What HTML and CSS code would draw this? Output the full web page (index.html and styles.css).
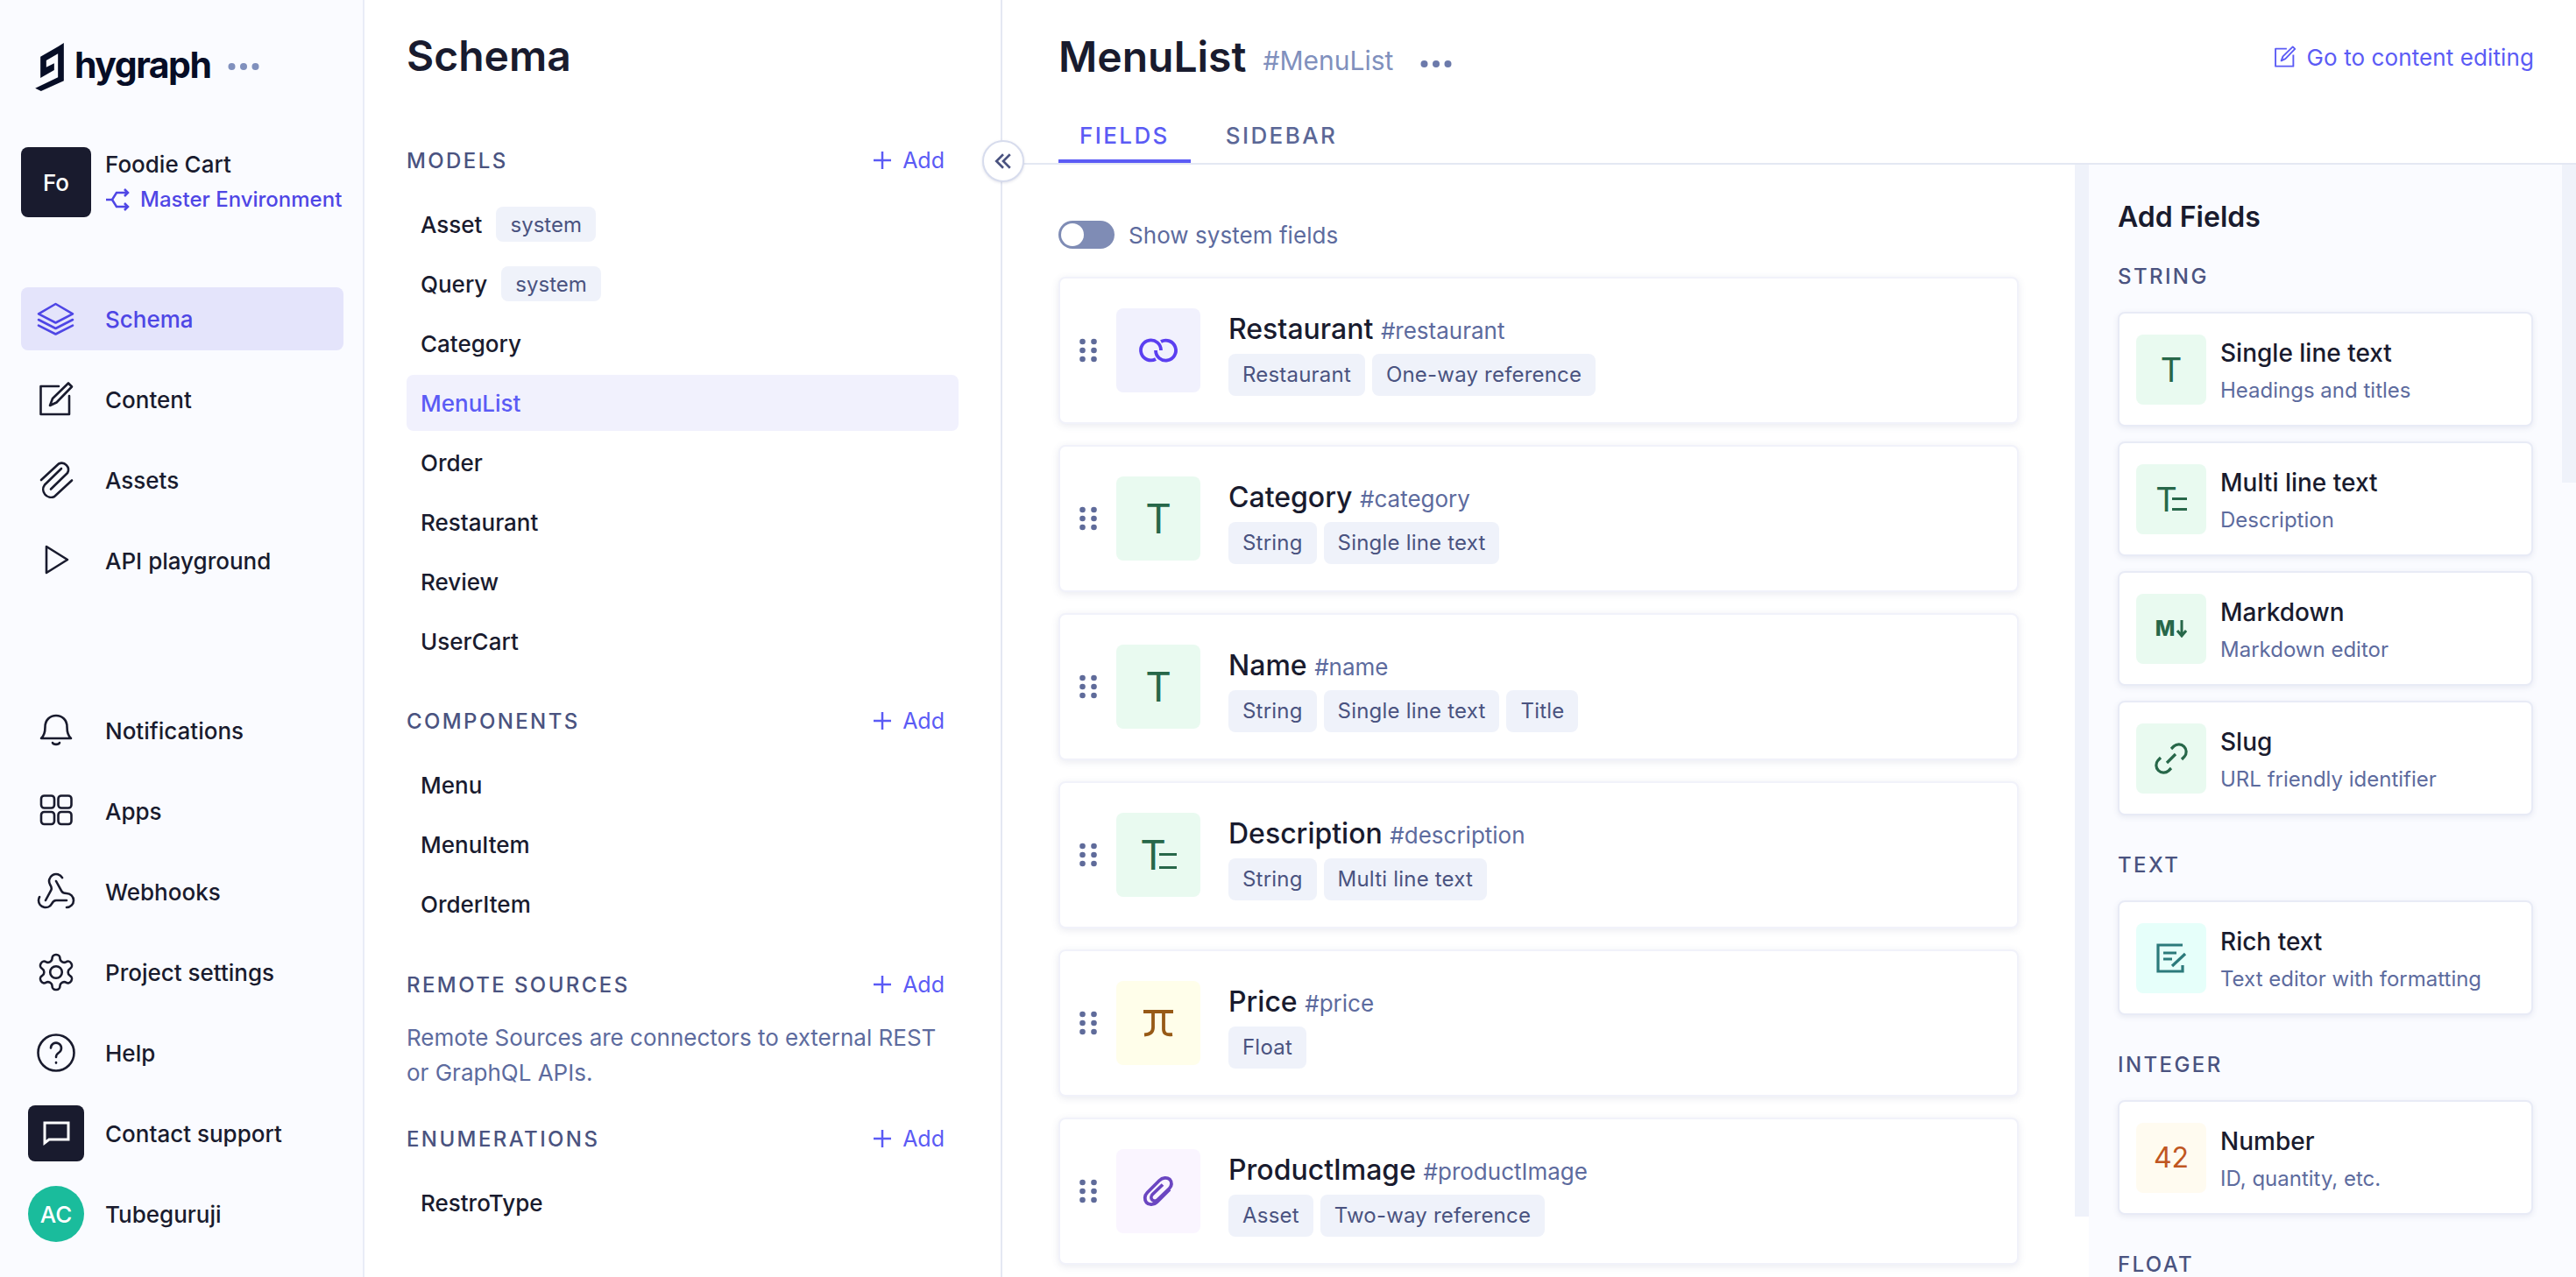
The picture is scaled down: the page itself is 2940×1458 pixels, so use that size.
FILE: index.html
```html
<!DOCTYPE html>
<html lang="en">
<head>
<meta charset="utf-8">
<title>Schema - MenuList</title>
<link rel="stylesheet" href="styles.css">
</head>
<body>
<svg class="defs" width="0" height="0" aria-hidden="true">
  <symbol id="i-layers" viewBox="0 0 48 48"><path d="M23.5 7 43 18.3 23.5 28.5 4 18.3Z"/><path d="M4 25 23.5 35 43 25"/><path d="M4 31.7 23.5 41.5 43 31.7"/></symbol>
  <symbol id="i-edit" viewBox="0 0 48 48"><path d="M27 9H6.5V41H39V20"/><path d="M17 31l3-8L38 5.500l4 4L24.500 27.500Z"/></symbol>
  <symbol id="i-clip" viewBox="0 0 48 48"><path d="M7 24 27 5.500A7.600 7.600 0 0 1 37 16L18 34.500"/><path d="M42 24.500 22 43A9 9 0 0 1 11 29.500L30 11"/></symbol>
  <symbol id="i-play" viewBox="0 0 48 48"><path d="M13 8 37 23 13 38Z"/></symbol>
  <symbol id="i-bell" viewBox="0 0 48 48"><path d="M7 33H41C37.500 30 36.500 26 36.500 20 36.500 12 31 7 24 7 17 7 11.500 12 11.500 20 11.500 26 10.500 30 7 33Z"/><path d="M20 38C21 40.500 27 40.500 28 38"/></symbol>
  <symbol id="i-apps" viewBox="0 0 48 48"><rect x="7" y="6.500" width="15" height="14" rx="3.500"/><rect x="26.500" y="6.500" width="15" height="14" rx="3.500"/><rect x="7" y="25" width="15" height="14" rx="3.500"/><rect x="26.500" y="25" width="15" height="14" rx="3.500"/></symbol>
  <symbol id="i-hook" viewBox="0 0 24 24"><path d="M18 16.980h-5.990c-1.100 0-1.950.940-2.480 1.900A4 4 0 0 1 2 17c.010-.700.200-1.400.570-2"/><path d="m6 17 3.130-5.780c.530-.970.100-2.180-.500-3.100a4 4 0 1 1 6.890-4.060"/><path d="m12 6 3.130 5.730C15.660 12.700 16.900 13 18 13a4 4 0 0 1 0 8"/></symbol>
  <symbol id="i-gear" viewBox="0 0 24 24"><path d="M12.220 2h-.440a2 2 0 0 0-2 2v.180a2 2 0 0 1-1 1.730l-.430.250a2 2 0 0 1-2 0l-.150-.080a2 2 0 0 0-2.730.730l-.220.380a2 2 0 0 0 .730 2.730l.150.100a2 2 0 0 1 1 1.720v.510a2 2 0 0 1-1 1.740l-.150.090a2 2 0 0 0-.730 2.730l.220.380a2 2 0 0 0 2.730.730l.150-.080a2 2 0 0 1 2 0l.430.250a2 2 0 0 1 1 1.730V20a2 2 0 0 0 2 2h.440a2 2 0 0 0 2-2v-.180a2 2 0 0 1 1-1.730l.430-.250a2 2 0 0 1 2 0l.150.080a2 2 0 0 0 2.730-.730l.220-.390a2 2 0 0 0-.730-2.730l-.150-.080a2 2 0 0 1-1-1.740v-.500a2 2 0 0 1 1-1.740l.150-.090a2 2 0 0 0 .730-2.730l-.220-.380a2 2 0 0 0-2.730-.730l-.150.080a2 2 0 0 1-2 0l-.430-.250a2 2 0 0 1-1-1.730V4a2 2 0 0 0-2-2z"/><circle cx="12" cy="12" r="3.400"/></symbol>
  <symbol id="i-help" viewBox="0 0 48 48"><circle cx="24" cy="24" r="20.500"/><path d="M18 18.500a6 6 0 1 1 9.500 5c-2.200 1.500-3.500 2.700-3.500 5.500"/><path d="M24 35v.6"/></symbol>
  <symbol id="i-plus" viewBox="0 0 20 20"><path d="M10 0V20M0 10H20"/></symbol>
  <symbol id="i-drag" viewBox="0 0 20 28"><circle cx="3.500" cy="4" r="3.300"/><circle cx="16.500" cy="4" r="3.300"/><circle cx="3.500" cy="14" r="3.300"/><circle cx="16.500" cy="14" r="3.300"/><circle cx="3.500" cy="24" r="3.300"/><circle cx="16.500" cy="24" r="3.300"/></symbol>
  <symbol id="i-dots" viewBox="0 0 36 10"><circle cx="4.500" cy="5" r="4"/><circle cx="18" cy="5" r="4"/><circle cx="31.500" cy="5" r="4"/></symbol>
</svg>

<div class="app">
  <aside class="rail">
    <div class="brand">
      <svg class="brand-mark" viewBox="30 25 98 165"><path d="M128 25V155L50 190 30 180 108 143V62L68 85V108L95 95V118L48 145V72L108 38Z"/></svg>
      <span class="brand-name">hygraph</span>
      <svg class="brand-dots" viewBox="0 0 36 10"><use href="#i-dots"/></svg>
    </div>
    <div class="project">
      <div class="project-badge">Fo</div>
      <div class="project-text">
        <div class="project-name">Foodie Cart</div>
        <div class="project-env">
          <svg class="env-icon" viewBox="0 0 28 26"><path d="M1 13H8L13 5H25M8 13l5 8H25M22 1l4 4-4 4M22 17l4 4-4 4"/></svg>
          <span>Master Environment</span>
        </div>
      </div>
    </div>
    <nav class="rail-nav">
      <a class="rail-item is-active"><span class="rail-slot"><svg class="rail-icon"><use href="#i-layers"/></svg></span><span>Schema</span></a>
      <a class="rail-item"><span class="rail-slot"><svg class="rail-icon"><use href="#i-edit"/></svg></span><span>Content</span></a>
      <a class="rail-item"><span class="rail-slot"><svg class="rail-icon"><use href="#i-clip"/></svg></span><span>Assets</span></a>
      <a class="rail-item"><span class="rail-slot"><svg class="rail-icon"><use href="#i-play"/></svg></span><span>API playground</span></a>
    </nav>
    <nav class="rail-nav rail-nav-bottom">
      <a class="rail-item"><span class="rail-slot"><svg class="rail-icon"><use href="#i-bell"/></svg></span><span>Notifications</span></a>
      <a class="rail-item"><span class="rail-slot"><svg class="rail-icon"><use href="#i-apps"/></svg></span><span>Apps</span></a>
      <a class="rail-item"><span class="rail-slot"><svg class="rail-icon rail-icon-sm"><use href="#i-hook"/></svg></span><span>Webhooks</span></a>
      <a class="rail-item"><span class="rail-slot"><svg class="rail-icon rail-icon-gear"><use href="#i-gear"/></svg></span><span>Project settings</span></a>
      <a class="rail-item"><span class="rail-slot"><svg class="rail-icon"><use href="#i-help"/></svg></span><span>Help</span></a>
      <a class="rail-item"><span class="rail-slot"><span class="support-badge"><svg class="support-icon" viewBox="0 0 64 64"><path d="M19 20H46V39H24L19 43Z"/></svg></span></span><span>Contact support</span></a>
      <a class="rail-item"><span class="rail-slot"><span class="user-badge">AC</span></span><span>Tubeguruji</span></a>
    </nav>
  </aside>

  <section class="models">
    <h1 class="models-title">Schema</h1>
    <div class="group-head group-head-first"><span>MODELS</span><a class="add"><svg class="add-icon"><use href="#i-plus"/></svg>Add</a></div>
    <ul class="list">
      <li class="list-item">Asset<span class="sys">system</span></li>
      <li class="list-item">Query<span class="sys">system</span></li>
      <li class="list-item">Category</li>
      <li class="list-item is-selected">MenuList</li>
      <li class="list-item">Order</li>
      <li class="list-item">Restaurant</li>
      <li class="list-item">Review</li>
      <li class="list-item">UserCart</li>
    </ul>
    <div class="group-head"><span>COMPONENTS</span><a class="add"><svg class="add-icon"><use href="#i-plus"/></svg>Add</a></div>
    <ul class="list">
      <li class="list-item">Menu</li>
      <li class="list-item">MenuItem</li>
      <li class="list-item">OrderItem</li>
    </ul>
    <div class="group-head group-head-remote"><span>REMOTE SOURCES</span><a class="add"><svg class="add-icon"><use href="#i-plus"/></svg>Add</a></div>
    <p class="group-note">Remote Sources are connectors to external REST or GraphQL APIs.</p>
    <div class="group-head group-head-enum"><span>ENUMERATIONS</span><a class="add"><svg class="add-icon"><use href="#i-plus"/></svg>Add</a></div>
    <ul class="list">
      <li class="list-item">RestroType</li>
    </ul>
    <button class="collapse" type="button" aria-label="Collapse"><svg viewBox="0 0 18 16"><path d="M9 1 2 8l7 7M16 1 9 8l7 7"/></svg></button>
  </section>

  <main class="main">
    <header class="main-head">
      <div class="main-title-row">
        <h2 class="main-title">MenuList</h2>
        <span class="main-api">#MenuList</span>
        <svg class="main-dots" viewBox="0 0 36 10"><use href="#i-dots"/></svg>
        <a class="go-link"><svg class="go-icon"><use href="#i-edit"/></svg>Go to content editing</a>
      </div>
      <div class="tabs">
        <a class="tab is-current">FIELDS</a>
        <a class="tab">SIDEBAR</a>
      </div>
    </header>

    <div class="main-body">
      <div class="fields">
        <label class="toggle-row"><span class="toggle"><span class="toggle-knob"></span></span>Show system fields</label>
        <div class="field-list">
          <article class="field">
            <svg class="drag"><use href="#i-drag"/></svg>
            <div class="tile tile-lg tile-rel"><svg class="glyph-lg" viewBox="0 0 48 48"><path d="M21 34A11.500 11.500 0 1 1 27 24"/><path d="M27 14A11.500 11.500 0 1 1 21 24"/></svg></div>
            <div class="field-text">
              <div class="field-name">Restaurant <span class="field-api">#restaurant</span></div>
              <div class="tags"><span class="tag">Restaurant</span><span class="tag">One-way reference</span></div>
            </div>
          </article>
          <article class="field">
            <svg class="drag"><use href="#i-drag"/></svg>
            <div class="tile tile-lg tile-str"><span class="tee">T</span></div>
            <div class="field-text">
              <div class="field-name">Category <span class="field-api">#category</span></div>
              <div class="tags"><span class="tag">String</span><span class="tag">Single line text</span></div>
            </div>
          </article>
          <article class="field">
            <svg class="drag"><use href="#i-drag"/></svg>
            <div class="tile tile-lg tile-str"><span class="tee">T</span></div>
            <div class="field-text">
              <div class="field-name">Name <span class="field-api">#name</span></div>
              <div class="tags"><span class="tag">String</span><span class="tag">Single line text</span><span class="tag">Title</span></div>
            </div>
          </article>
          <article class="field">
            <svg class="drag"><use href="#i-drag"/></svg>
            <div class="tile tile-lg tile-str"><span class="tee">T</span><span class="bars"></span></div>
            <div class="field-text">
              <div class="field-name">Description <span class="field-api">#description</span></div>
              <div class="tags"><span class="tag">String</span><span class="tag">Multi line text</span></div>
            </div>
          </article>
          <article class="field">
            <svg class="drag"><use href="#i-drag"/></svg>
            <div class="tile tile-lg tile-float"><svg class="glyph-lg" viewBox="0 0 48 48"><path d="M7 11H41"/><path d="M18 11V29C18 34 15 37 8 37.500"/><path d="M30 11V31C30 36 33 38 40 37"/></svg></div>
            <div class="field-text">
              <div class="field-name">Price <span class="field-api">#price</span></div>
              <div class="tags"><span class="tag">Float</span></div>
            </div>
          </article>
          <article class="field">
            <svg class="drag"><use href="#i-drag"/></svg>
            <div class="tile tile-lg tile-asset"><svg class="glyph-lg" viewBox="0 0 48 48"><path d="M37 22 23 36C19 40 13 40 10.500 37 8 34 8 29 11.500 25.500L25 12C29 8 34 8 37 10.500 40 13.500 39.500 18 36.500 21L23.500 33.500C21.500 35.500 18.500 35.500 17 34 15.500 32.500 15.500 29.500 17.500 27.500L29 16.500"/></svg></div>
            <div class="field-text">
              <div class="field-name">ProductImage <span class="field-api">#productImage</span></div>
              <div class="tags"><span class="tag">Asset</span><span class="tag">Two-way reference</span></div>
            </div>
          </article>
        </div>
      </div>
      <div class="track track-left"></div>
      <aside class="palette">
        <div class="palette-scroll">
          <h3 class="palette-title">Add Fields</h3>
          <div class="palette-label palette-label-first">STRING</div>
          <div class="palette-group">
            <div class="ptype"><div class="tile tile-sm tile-str"><span class="tee tee-sm">T</span></div><div><div class="ptype-name">Single line text</div><div class="ptype-sub">Headings and titles</div></div></div>
            <div class="ptype"><div class="tile tile-sm tile-str"><span class="tee tee-sm">T</span><span class="bars bars-sm"></span></div><div><div class="ptype-name">Multi line text</div><div class="ptype-sub">Description</div></div></div>
            <div class="ptype"><div class="tile tile-sm tile-str"><span class="md-m">M</span><svg class="md-arrow" viewBox="0 0 12 20"><path d="M6 0V17M1 12l5 6 5-6"/></svg></div><div><div class="ptype-name">Markdown</div><div class="ptype-sub">Markdown editor</div></div></div>
            <div class="ptype"><div class="tile tile-sm tile-str"><svg class="glyph-sm" viewBox="0 0 40 40"><path d="M20 9l3-3A8.500 8.500 0 0 1 35 18l-3 3"/><path d="M20 31l-3 3A8.500 8.500 0 0 1 5 22l3-3"/><path d="M15 25 25 15"/></svg></div><div><div class="ptype-name">Slug</div><div class="ptype-sub">URL friendly identifier</div></div></div>
          </div>
          <div class="palette-label">TEXT</div>
          <div class="palette-group">
            <div class="ptype"><div class="tile tile-sm tile-rich"><svg class="glyph-sm" viewBox="0 0 40 40"><path d="M33 5H5V35H33V28"/><path d="M11 14H26M11 21H21"/><path d="M21 29 36 15"/></svg></div><div><div class="ptype-name">Rich text</div><div class="ptype-sub">Text editor with formatting</div></div></div>
          </div>
          <div class="palette-label">INTEGER</div>
          <div class="palette-group">
            <div class="ptype"><div class="tile tile-sm tile-int"><span class="int-num">42</span></div><div><div class="ptype-name">Number</div><div class="ptype-sub">ID, quantity, etc.</div></div></div>
          </div>
          <div class="palette-label">FLOAT</div>
        </div>
        <div class="track track-right"></div>
      </aside>
    </div>
  </main>
</div>
</body>
</html>
```

FILE: styles.css
```css
* { box-sizing: border-box; }
html, body { margin: 0; height: 100%; overflow: hidden; }
body {
  font-family: "Inter", "Liberation Sans", sans-serif;
  color: #191b2e;
  background: #fff;
  font-size: 28px;
}
h1, h2, h3, p, ul { margin: 0; padding: 0; }
ul { list-style: none; }
a { color: inherit; text-decoration: none; }
.defs { position: absolute; }
.app { display: flex; height: 1458px; }

/* rail */
.rail {
  width: 416px;
  flex: none;
  background: #fafbff;
  border-right: 2px solid #e9ecf7;
  padding: 48px 22px 36px 24px;
  display: flex;
  flex-direction: column;
}
.brand { display: flex; align-items: center; height: 56px; padding-left: 16px; }
.brand-mark { width: 33px; height: 55px; fill: #060d26; flex: none; }
.brand-name {
  font-size: 41px;
  font-weight: 700;
  letter-spacing: -1.500px;
  color: #060d26;
  margin-left: 12px;
  line-height: 56px;
  margin-top: -4px;
}
.brand-dots { width: 36px; height: 10px; margin-left: 20px; fill: #8090bd; }
.project { display: flex; align-items: center; gap: 16px; margin-top: 64px; height: 80px; }
.project-badge {
  width: 80px; height: 80px; border-radius: 8px;
  background: #191b2e; color: #fff;
  display: flex; align-items: center; justify-content: center;
  font-size: 26px; font-weight: 500;
}
.project-name { font-size: 26px; font-weight: 500; line-height: 38px; }
.project-env { display: flex; align-items: center; gap: 12px; font-size: 24px; font-weight: 500; color: #4f46e5; line-height: 38px; margin-top: 2px; }
.env-icon { width: 28px; height: 26px; fill: none; stroke: #4f46e5; stroke-width: 2.500; }
.rail-nav { display: flex; flex-direction: column; gap: 20px; margin-top: 80px; }
.rail-nav-bottom { margin-top: auto; }
.rail-item {
  display: flex; align-items: center; gap: 16px;
  height: 72px; border-radius: 8px;
  font-size: 26px; font-weight: 500; color: #191b2e;
}
.rail-item.is-active { background: #e4e4fb; color: #4e46e5; }
.rail-slot { width: 80px; display: flex; justify-content: center; align-items: center; flex: none; }
.rail-icon { width: 48px; height: 48px; fill: none; stroke: currentColor; stroke-width: 2.600; stroke-linejoin: round; stroke-linecap: round; }
.rail-icon-sm { stroke-width: 1.300; }
.rail-icon-gear { width: 48px; height: 48px; stroke-width: 1.300; }
.support-badge {
  width: 64px; height: 64px; border-radius: 8px; background: #191b2e; display: block;
}
.support-icon { width: 64px; height: 64px; fill: none; stroke: #fff; stroke-width: 3; display: block; }
.user-badge {
  width: 64px; height: 64px; border-radius: 50%;
  background: #1abc9c; color: #fff; font-size: 26px;
  display: flex; align-items: center; justify-content: center;
}

/* models */
.models {
  position: relative;
  width: 728px;
  flex: none;
  border-right: 2px solid #e4e8f3;
  padding: 32px 48px 0 48px;
}
.models-title { font-size: 48px; font-weight: 600; line-height: 64px; }
.group-head {
  display: flex; align-items: center; justify-content: space-between;
  height: 48px; margin-top: 35px; margin-bottom: 17px; padding-right: 16px;
  font-size: 24px; font-weight: 500; letter-spacing: 2.400px; color: #4a5380;
}
.group-head-first { margin-top: 63px; }
.group-head-remote { margin-top: 36px; }
.group-head-enum { margin-top: 31px; }
.add { display: flex; align-items: center; gap: 13px; color: #5b5bf5; letter-spacing: 0; font-size: 25px; font-weight: 400; }
.add-icon { width: 20px; height: 20px; fill: none; stroke: #5b5bf5; stroke-width: 2.500; }
.list { display: flex; flex-direction: column; gap: 4px; }
.list-item {
  display: flex; align-items: center; gap: 16px;
  height: 64px; padding: 0 16px; border-radius: 8px;
  font-size: 26px; font-weight: 450; color: #191b2e;
}
.list-item.is-selected { background: #f1f1fd; color: #5b5bf5; }
.sys {
  height: 40px; padding: 0 16px; border-radius: 8px;
  background: #eff2fa; color: #4a5380;
  display: inline-flex; align-items: center;
  font-size: 24px; font-weight: 400;
}
.group-note { font-size: 26px; line-height: 40px; color: #5d6b9e; padding-right: 20px; }
.collapse {
  position: absolute; right: -27px; top: 160px;
  width: 48px; height: 48px; padding: 0;
  border-radius: 50%; border: 2px solid #d7dced;
  background: #fff; box-shadow: 0 1px 3px rgba(60, 70, 120, .15);
  display: flex; align-items: center; justify-content: center;
}
.collapse svg { width: 20px; height: 18px; fill: none; stroke: #4a5380; stroke-width: 2.400; }

/* main */
.main { flex: 1; min-width: 0; display: flex; flex-direction: column; }
.main-head { height: 188px; border-bottom: 2px solid #e4e8f3; padding: 0 48px 0 64px; flex: none; }
.main-title-row { height: 130px; display: flex; align-items: center; }
.main-title { font-size: 48px; font-weight: 600; line-height: 64px; }
.main-api { font-size: 30px; color: #8090bd; margin-left: 19px; margin-top: 8px; }
.main-dots { width: 36px; height: 10px; fill: #6c7aab; margin-left: 31px; margin-top: 16px; }
.go-link { margin-left: auto; display: flex; align-items: center; gap: 10px; color: #5b5bf5; font-size: 26px; letter-spacing: .1px; }
.go-icon { width: 30px; height: 30px; fill: none; stroke: #5b5bf5; stroke-width: 3; stroke-linejoin: round; }
.tabs { display: flex; gap: 16px; height: 56px; }
.tab {
  height: 56px; padding: 0 24px 4px;
  border-bottom: 4px solid transparent;
  display: flex; align-items: center;
  font-size: 26px; font-weight: 500; letter-spacing: 2.400px; color: #5b6796;
}
.tab.is-current { color: #5b5bf5; border-bottom-color: #5b5bf5; }

.main-body { flex: 1; min-height: 0; display: flex; overflow: hidden; }
.fields { flex: 1; min-width: 0; padding: 64px 64px 0; }
.toggle-row { display: flex; align-items: center; gap: 16px; height: 32px; font-size: 26px; letter-spacing: .05px; color: #5d6b9e; }
.toggle { width: 64px; height: 32px; border-radius: 16px; background: #7f8cb5; padding: 3px; display: block; }
.toggle-knob { width: 26px; height: 26px; border-radius: 50%; background: #fff; display: block; }
.field-list { display: flex; flex-direction: column; gap: 24px; margin-top: 32px; }
.field {
  height: 168px; flex: none;
  background: #fff; border: 2px solid #f1f2fa; border-radius: 8px;
  box-shadow: 0 2px 8px rgba(70, 80, 130, .12);
  display: flex; align-items: center;
  padding-left: 22px;
}
.drag { width: 20px; height: 28px; fill: #5f6b9a; flex: none; }
.tile { border-radius: 8px; display: flex; align-items: center; justify-content: center; flex: none; }
.tile-lg { width: 96px; height: 96px; margin-left: 22px; }
.tile-sm { width: 80px; height: 80px; }
.tile-rel { background: #f1f1fd; stroke: #5b3ff0; }
.tile-str { background: #e9faf0; color: #276749; stroke: #276749; }
.tile-float { background: #fffeea; stroke: #975a16; }
.tile-asset { background: #faf5ff; stroke: #6b46c1; }
.tile-rich { background: #e6fffa; stroke: #2c7a7b; }
.tile-int { background: #fffbf0; color: #c05621; }
.glyph-lg { width: 48px; height: 48px; fill: none; stroke-width: 3.800; }
.glyph-sm { width: 40px; height: 40px; fill: none; stroke-width: 3.200; }
.tee { font-size: 46px; font-weight: 400; line-height: 46px; color: #276749; }
.tee-sm { font-size: 38px; line-height: 38px; }
.bars { width: 20px; height: 18px; border-top: 3.500px solid #276749; border-bottom: 3.500px solid #276749; margin-left: -8px; margin-top: 14px; flex: none; }
.bars-sm { width: 17px; height: 15px; border-top-width: 3px; border-bottom-width: 3px; margin-left: -6px; margin-top: 11px; }
.md-m { font-size: 24px; font-weight: 800; color: #276749; line-height: 24px; }
.md-arrow { width: 12px; height: 20px; margin-left: 2px; fill: none; stroke: #276749; stroke-width: 3; }
.int-num { font-size: 32px; font-weight: 400; }
.field-text { margin-left: 32px; margin-top: 7px; }
.field-name { font-size: 32px; font-weight: 500; line-height: 40px; }
.field-api { font-size: 26px; font-weight: 400; color: #5d6b9e; }
.tags { display: flex; gap: 8px; margin-top: 6px; }
.tag {
  height: 48px; padding: 0 16px; border-radius: 8px;
  background: #eff2fa; color: #4a5380;
  display: flex; align-items: center; font-size: 24px; letter-spacing: .2px; padding-bottom: 1px;
}
.track { width: 16px; flex: none; background: #eff2fa; }
.track-left { height: 1201px; }
.track-right { height: 363px; }
.palette { width: 556px; flex: none; background: #fafbff; display: flex; }
.palette-scroll { flex: 1; min-width: 0; padding: 40px 33px 0; }
.palette-title { font-size: 32px; font-weight: 600; line-height: 40px; }
.palette-label { font-size: 24px; font-weight: 500; letter-spacing: 2.400px; color: #4a5380; line-height: 28px; margin-top: 43px; margin-bottom: 26px; }
.palette-label-first { margin-top: 34px; margin-bottom: 26px; }
.palette-group { display: flex; flex-direction: column; gap: 17px; }
.ptype {
  height: 131px; background: #fff;
  border: 2px solid #e8ebf6; border-radius: 8px;
  box-shadow: 0 2px 6px rgba(70, 80, 130, .1);
  display: flex; align-items: center; gap: 16px; padding-left: 19px;
}
.ptype-name { font-size: 28px; font-weight: 500; line-height: 40px; padding-top: 3px; }
.ptype-sub { font-size: 24px; color: #5d6b9e; line-height: 36px; margin-top: 5px; }
```
